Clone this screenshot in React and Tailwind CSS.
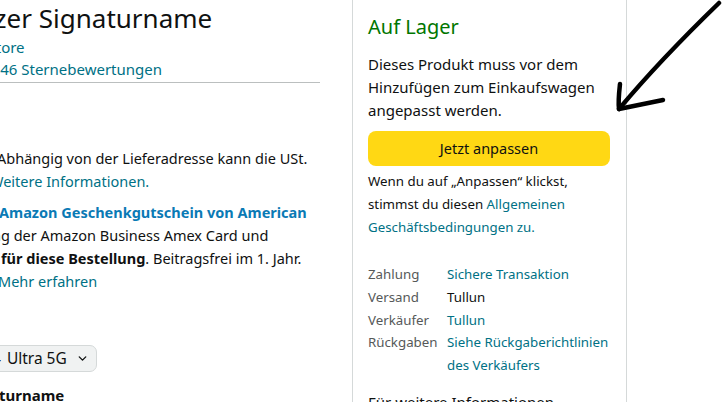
import React from 'react';
import { ChevronDown } from 'lucide-react';

const font = { fontFamily: '"Noto Sans", "Open Sans", Arial, sans-serif' };

function Arrow() {
  return (
    <svg className="absolute left-0 top-0 pointer-events-none" width="725" height="402" viewBox="0 0 725 402">
      <g fill="none" stroke="#000" strokeWidth="4.5" strokeLinecap="round" strokeLinejoin="round">
        <path d="M719 3 C 688 33, 650 72, 619 109" />
        <path d="M620 84 C 619 93, 618 101, 619 109 C 633 106, 648 103, 663 100" />
      </g>
    </svg>
  );
}

function InfoRow({ label, children }) {
  return (
    <div className="flex">
      <span className="w-[79px] shrink-0 text-[#565959]">{label}</span>
      <span className="whitespace-nowrap">{children}</span>
    </div>
  );
}

export default function App() {
  return (
    <div className="relative w-[725px] h-[402px] overflow-hidden bg-white text-[#0f1111]" style={font}>
      <div className="flex">
        {/* linke Spalte, links abgeschnitten */}
        <div className="w-[352px] shrink-0 overflow-hidden">
          <h1 className="pt-[2px] text-[26px] leading-[32px] font-normal whitespace-nowrap ml-[-36px]">
            Sitzer Signaturname
          </h1>
          <div className="mt-[2px] text-[15px] leading-[22px] text-[#007185] whitespace-nowrap">
            <div className="ml-[-12.5px]">Store</div>
            <div className="ml-[-21px]">2.346 Sternebewertungen</div>
          </div>
          <div className="mt-[2px] w-[320px] border-t border-[#bbbfbf]" />

          <div className="mt-[64px] text-[14.5px] leading-[23px] whitespace-nowrap">
            <div className="ml-[-3px]">Abhängig von der Lieferadresse kann die USt.</div>
            <div className="ml-[-10px] text-[#007185]">Weitere Informationen.</div>
          </div>

          <div className="mt-[8px] text-[14.5px] leading-[23px] whitespace-nowrap">
            <div className="ml-[-1px] font-bold text-[#0a7ab5]">Amazon Geschenkgutschein von American</div>
            <div className="ml-[-8px]">ng der Amazon Business Amex Card und</div>
            <div className="ml-[1px]">
              <b>für diese Bestellung</b>. Beitragsfrei im 1. Jahr.
            </div>
            <div className="ml-[-2px] text-[#007185]">Mehr erfahren</div>
          </div>

          <div className="mt-[52px] ml-[-20px] inline-flex h-[27px] w-[117px] items-center rounded-[7px] border border-[#d5d9d9] bg-[#f0f2f2] pl-[11px] pr-[7px] text-[15.5px]">
            <span className="whitespace-nowrap">4</span>
            <span className="ml-[6px] whitespace-nowrap">Ultra 5G</span>
            <ChevronDown size={13} strokeWidth={2.5} className="ml-auto" />
          </div>

          <div className="mt-[13px] ml-[-42px] text-[15px] font-bold leading-[20px] whitespace-nowrap">Signaturname</div>
        </div>

        {/* Kaufbox */}
        <div className="w-[275px] shrink-0 h-[402px] border-x border-[#d5d9d9] pl-[15px] pr-[16px]">
          <div className="mt-[15px] text-[20px] leading-[24px] text-[#007600]">Auf Lager</div>
          <p className="mt-[14px] text-[15px] leading-[23px]">
            Dieses Produkt muss vor dem Hinzufügen zum Einkaufswagen angepasst werden.
          </p>
          <button
            type="button"
            className="mt-[9px] flex h-[35px] w-full items-center justify-center rounded-[8px] bg-[#ffd814] text-[14.5px]"
          >
            Jetzt anpassen
          </button>
          <p className="mt-[4px] text-[13.3px] leading-[23px]">
            Wenn du auf „Anpassen“ klickst, stimmst du diesen{' '}
            <span className="text-[#007185]">Allgemeinen Geschäftsbedingungen zu.</span>
          </p>
          <div className="mt-[24px] text-[13.3px] leading-[22.8px]">
            <InfoRow label="Zahlung">
              <span className="text-[#007185]">Sichere Transaktion</span>
            </InfoRow>
            <InfoRow label="Versand">Tullun</InfoRow>
            <InfoRow label="Verkäufer">
              <span className="text-[#007185]">Tullun</span>
            </InfoRow>
            <InfoRow label="Rückgaben">
              <span className="text-[#007185]">
                Siehe Rückgaberichtlinien
                <br />
                des Verkäufers
              </span>
            </InfoRow>
          </div>
          <div className="mt-[14px] text-[15px] leading-[23px] whitespace-nowrap">Für weitere Informationen</div>
        </div>
      </div>
      <Arrow />
    </div>
  );
}
